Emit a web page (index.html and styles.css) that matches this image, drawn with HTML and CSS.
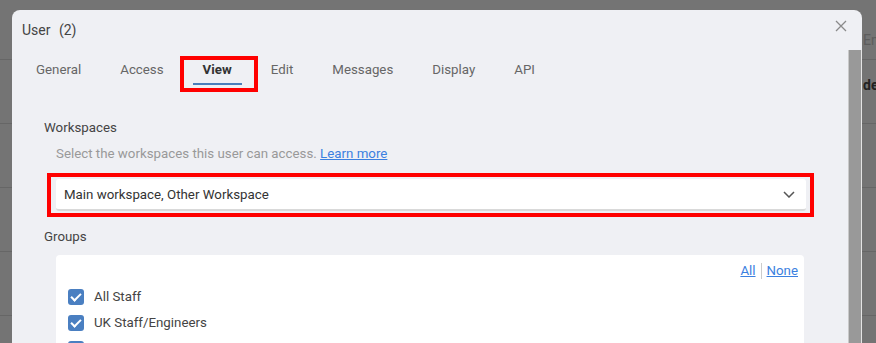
FILE: index.html
```html
<!DOCTYPE html>
<html lang="en">
<head>
    <meta charset="UTF-8">
    <meta name="viewport" content="width=device-width, initial-scale=1.0">
    <title>User</title>
    <link rel="stylesheet" href="styles.css">
</head>
<body>
    <!-- page behind the modal (dimmed) -->
    <div class="page">
        <div class="page-row page-head"><span></span><span class="cell-head">Email</span></div>
        <div class="page-row"><span></span><span class="cell-bold">dev@example.com</span></div>
        <div class="page-row"><span></span><span></span></div>
        <div class="page-row"><span></span><span></span></div>
        <div class="page-row"><span></span><span></span></div>
    </div>

    <div class="dialog">
        <div class="dialog-header">
            <div class="dialog-title">User <span class="count">(2)</span></div>
            <svg class="close" width="12" height="12" viewBox="0 0 12 12">
                <path d="M1 1 L11 11 M11 1 L1 11" stroke="#8a8a8a" stroke-width="1.3" fill="none"/>
            </svg>
        </div>
        <div class="dialog-scroll">
            <div class="dialog-main">
                <div class="tabs">
                    <div class="tab">General</div>
                    <div class="tab">Access</div>
                    <div class="tab active">View<span class="mark mark-tab"></span></div>
                    <div class="tab">Edit</div>
                    <div class="tab">Messages</div>
                    <div class="tab">Display</div>
                    <div class="tab">API</div>
                </div>
                <div class="dialog-body">
                    <div class="field-label">Workspaces</div>
                    <div class="field-help">Select the workspaces this user can access. <a href="#">Learn more</a></div>
                    <div class="mark-box">
                        <div class="select">
                            <span>Main workspace, Other Workspace</span>
                            <svg width="12" height="7" viewBox="0 0 12 7">
                                <path d="M1 1 L6 6 L11 1" stroke="#555" stroke-width="1.5" fill="none"/>
                            </svg>
                        </div>
                    </div>
                    <div class="field-label groups-label">Groups</div>
                    <div class="group-panel">
                        <div class="group-links"><a href="#">All</a><span class="sep"></span><a href="#">None</a></div>
                        <div class="group-list">
                            <label class="check-row"><span class="check"></span>All Staff</label>
                            <label class="check-row"><span class="check"></span>UK Staff/Engineers</label>
                            <label class="check-row"><span class="check"></span>US Staff</label>
                        </div>
                    </div>
                </div>
            </div>
            <div class="scrollbar"></div>
        </div>
    </div>
</body>
</html>
```

FILE: styles.css
```css
html, body {
    margin: 0;
    height: 100%;
    overflow: hidden;
}
body {
    font-family: Roboto, "Liberation Sans", Arial, sans-serif;
    font-size: 13.3px;
    background-color: #747474;
}
.page-row {
    display: grid;
    grid-template-columns: 863px 1fr;
    height: 63px;
    border-bottom: 1px solid #666;
    white-space: nowrap;
    overflow: hidden;
}
.page-head {
    height: 59px;
}
.cell-head {
    padding-top: 32px;
    line-height: 16px;
    color: #5d5d5d;
    font-size: 14px;
}
.cell-bold {
    padding-top: 17px;
    line-height: 16px;
    color: #222;
    font-weight: bold;
    font-size: 14px;
}
.dialog {
    position: absolute;
    left: 12px;
    top: 10px;
    width: 850px;
    height: 400px;
    background-color: #eff0f4;
    border-radius: 8px 8px 0 0;
    overflow: hidden;
    display: flex;
    flex-direction: column;
}
.dialog-header {
    height: 40px;
    display: flex;
    align-items: flex-start;
    justify-content: space-between;
    padding: 0 15px 0 10px;
}
.dialog-title {
    margin-top: 12px;
    font-size: 14px;
    line-height: 16px;
    color: #444;
}
.count {
    margin-left: 5px;
}
.close {
    margin-top: 10px;
}
.dialog-scroll {
    flex: 1;
    display: flex;
}
.dialog-main {
    flex: 1;
}
.scrollbar {
    width: 12px;
    background-color: #999;
    border-left: 1px solid #c9c9c9;
    border-right: 1px solid #e4e4e4;
}
.tabs {
    display: flex;
    gap: 19px;
    padding-left: 14px;
}
.tab {
    position: relative;
    padding: 12px 10px 6px;
    line-height: 15px;
    color: #666;
    border-bottom: 2px solid transparent;
}
.tab.active {
    color: #333;
    font-weight: bold;
    border-bottom-color: #4a7ebb;
}
/* red annotation boxes from the screenshot */
.mark-tab {
    position: absolute;
    left: -13px;
    right: -16px;
    top: 6px;
    bottom: -9px;
    border: 4px solid #ff0000;
}
.dialog-body {
    padding: 35px 30px 0 32px;
}
.field-label {
    line-height: 16px;
    color: #444;
}
.field-help {
    margin: 10px 0 0 12px;
    line-height: 16px;
    color: #999;
}
.field-help a, .group-links a {
    color: #3b80e0;
}
.mark-box {
    margin: 11px 4px 0 3px;
    padding: 2px 4px 2px 5px;
    border: 4px solid #ff0000;
}
.select {
    height: 30px;
    background-color: #fff;
    border-radius: 3px;
    border-bottom: 2px solid #d9d9d9;
    display: flex;
    align-items: center;
    justify-content: space-between;
    padding: 0 11px 0 8px;
    color: #333;
}
.groups-label {
    margin-top: 12px;
}
.group-panel {
    margin: 10px 14px 0 12px;
    background-color: #fff;
    border-radius: 4px;
    padding: 8px 6px 0 12px;
    height: 120px;
}
.group-links {
    display: flex;
    justify-content: flex-end;
    align-items: center;
    line-height: 16px;
}
.sep {
    width: 1px;
    height: 16px;
    background-color: #ccc;
    margin: 0 5px;
}
.group-list {
    margin-top: 10px;
    display: flex;
    flex-direction: column;
    gap: 10px;
}
.check-row {
    display: flex;
    align-items: center;
    gap: 10px;
    line-height: 16px;
    color: #444;
}
.check {
    width: 16px;
    height: 16px;
    border-radius: 3px;
    background-color: #4a7fc1;
    position: relative;
}
.check::after {
    content: "";
    position: absolute;
    left: 5px;
    top: 2px;
    width: 4px;
    height: 8px;
    border: solid #fff;
    border-width: 0 2px 2px 0;
    transform: rotate(45deg);
}
```
